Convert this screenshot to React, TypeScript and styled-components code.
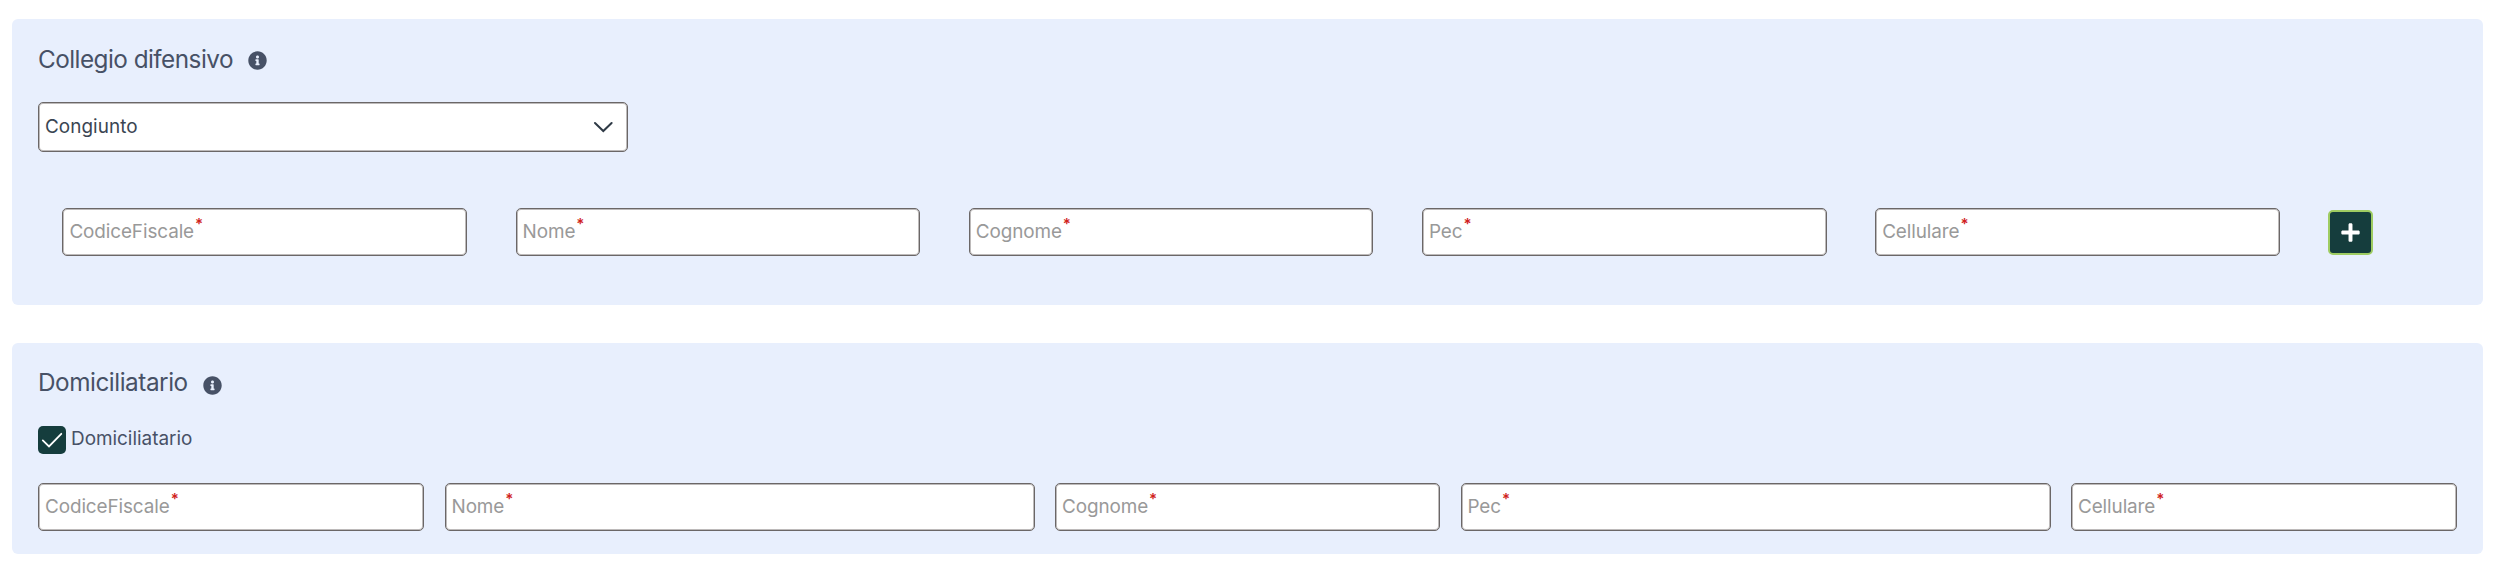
import React, { useState } from "react";
import styled, { createGlobalStyle } from "styled-components";
import { FaInfoCircle, FaPlus } from "react-icons/fa";

const GlobalStyle = createGlobalStyle`
  *, *::before, *::after { box-sizing: border-box; }
  body {
    margin: 0;
    background: #ffffff;
    font-family: Inter, "Liberation Sans", sans-serif;
    color: #475166;
  }
`;

const Page = styled.main`
  display: flex;
  flex-direction: column;
  gap: 38px;
  width: 2500px;
  padding: 19px 17px 14px 12px;
`;

const Card = styled.section<{ $height: number }>`
  display: flex;
  flex-direction: column;
  height: ${(p) => p.$height}px;
  padding: 0 26px;
  border-radius: 6px;
  background: #e8effd;
`;

const CardHeader = styled.header<{ $top: number; $iconOffset: number }>`
  display: flex;
  align-items: center;
  gap: 15px;
  height: 30px;
  margin-top: ${(p) => p.$top}px;

  svg {
    flex: none;
    width: 19px;
    height: 19px;
    margin-top: ${(p) => p.$iconOffset}px;
    color: #475166;
  }
`;

const Title = styled.h2<{ $tracking: number }>`
  margin: 0;
  font-size: 24.3px;
  font-weight: 400;
  line-height: 30px;
  letter-spacing: ${(p) => p.$tracking}px;
  white-space: nowrap;
`;

const Box = styled.div`
  display: flex;
  align-items: center;
  min-width: 0;
  height: 48px;
  padding: 0 6px;
  border: 1px solid #6b6767;
  border-radius: 5px;
  background: #ffffff;
  box-shadow: inset 0 0 0 1px #bdbaba;
  font-size: 18.9px;
  line-height: 24px;
  white-space: nowrap;
`;

const SelectBox = styled(Box)`
  justify-content: space-between;
  width: 590px;
  height: 50px;
  margin-top: 28px;
  padding-right: 14px;
  color: #3a4552;
  letter-spacing: 0.05px;
`;

const Placeholder = styled.label`
  color: #999999;
  letter-spacing: -0.1px;
`;

const Required = styled.span`
  align-self: flex-start;
  margin: 5px 0 0 1px;
  color: #d0211c;
  font-size: 15px;
  font-weight: 600;
  line-height: 20px;
`;

const DefenderRow = styled.div`
  display: grid;
  grid-template-columns: repeat(5, 404.6px) 45px;
  column-gap: 48.6px;
  align-items: center;
  margin-top: 56px;
  padding-left: 24.4px;
`;

const DomicileRow = styled.div`
  display: grid;
  grid-template-columns: 386px 590px 385px 590px 386px;
  justify-content: space-between;
  width: 2419px;
  margin-top: 29px;
`;

const AddButton = styled.button`
  display: flex;
  align-items: center;
  justify-content: center;
  width: 45px;
  height: 45px;
  padding: 0;
  border: 2px solid #9fcc62;
  border-radius: 5px;
  background: #153d3d;
  color: #ffffff;

  svg {
    width: 21px;
    height: 21px;
  }
`;

const CheckRow = styled.div`
  display: flex;
  align-items: center;
  gap: 5px;
  height: 28px;
  margin-top: 29px;
  font-size: 18.9px;
`;

const CheckLabel = styled.span`
  margin-top: -3px;
  line-height: 24px;
`;

const Checkbox = styled.button`
  flex: none;
  width: 28px;
  height: 28px;
  padding: 0;
  border: 0;
  border-radius: 5px;
  background: #153d3d;

  svg {
    display: block;
  }
`;

const Field = ({ label }: { label: string }) => (
  <Box>
    <Placeholder>{label}</Placeholder>
    <Required>*</Required>
  </Box>
);

const fields = ["CodiceFiscale", "Nome", "Cognome", "Pec", "Cellulare"];

export default function App() {
  const [checked, setChecked] = useState(true);

  return (
    <>
      <GlobalStyle />
      <Page>
        <Card $height={286}>
          <CardHeader $top={25} $iconOffset={2}>
            <Title $tracking={-0.53}>Collegio difensivo</Title>
            <FaInfoCircle />
          </CardHeader>
          <SelectBox>
            <span>Congiunto</span>
            <svg width="20" height="12" viewBox="0 0 20 12" fill="none">
              <path d="M2 2l8.3 8 8.3-8" stroke="#2f3a46" strokeWidth="2" strokeLinecap="round" />
            </svg>
          </SelectBox>
          <DefenderRow>
            {fields.map((f) => (
              <Field key={f} label={f} />
            ))}
            <AddButton aria-label="Aggiungi">
              <FaPlus />
            </AddButton>
          </DefenderRow>
        </Card>

        <Card $height={211}>
          <CardHeader $top={24} $iconOffset={6}>
            <Title $tracking={-0.46}>Domiciliatario</Title>
            <FaInfoCircle />
          </CardHeader>
          <CheckRow>
            <Checkbox role="checkbox" aria-checked={checked} onClick={() => setChecked(!checked)}>
              {checked && (
                <svg width="28" height="28" viewBox="0 0 28 28" fill="none">
                  <path d="M4.8 14.4l6.2 6L23.3 7.8" stroke="#ffffff" strokeWidth="1.8" strokeLinecap="round" />
                </svg>
              )}
            </Checkbox>
            <CheckLabel>Domiciliatario</CheckLabel>
          </CheckRow>
          <DomicileRow>
            {fields.map((f) => (
              <Field key={f} label={f} />
            ))}
          </DomicileRow>
        </Card>
      </Page>
    </>
  );
}
